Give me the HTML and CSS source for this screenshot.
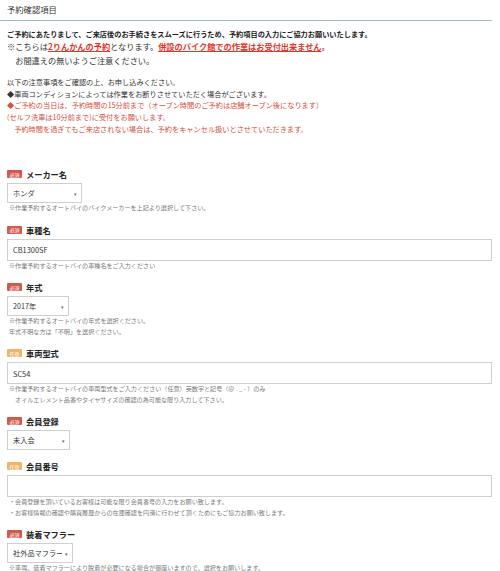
FILE: index.html
```html
<!DOCTYPE html>
<html lang="ja">
<head>
<meta charset="utf-8">
<title>予約確認項目</title>
<link rel="stylesheet" href="styles.css">
</head>
<body>
<div class="page">
  <h2 class="title">予約確認項目</h2>
  <div class="intro">
    <p class="lead">ご予約にあたりまして、ご来店後のお手続きをスムーズに行うため、予約項目の入力にご協力お願いいたします。</p>
    <p class="warn">※こちらは<strong class="em">2りんかんの予約</strong>となります。<strong class="em">併設のバイク館での作業はお受付出来ません</strong>。<br>　お間違えの無いようご注意ください。</p>
  </div>
  <ul class="notes">
    <li>以下の注意事項をご確認の上、お申し込みください。</li>
    <li>◆車両コンディションによっては作業をお断りさせていただく場合がございます。</li>
    <li class="red">◆ご予約の当日は、予約時間の15分前まで（オープン時間のご予約は店舗オープン後になります）</li>
    <li class="red">(セルフ洗車は10分前まで)に受付をお願いします。</li>
    <li class="red">　予約時間を過ぎてもご来店されない場合は、予約をキャンセル扱いとさせていただきます。</li>
  </ul>
  <form class="fields">
    <div class="field">
      <div class="label"><span class="badge req">必須</span>メーカー名</div>
      <div class="select w-maker"><select><option>ホンダ</option></select><span class="arrow">▾</span></div>
      <p class="hint">※作業予約するオートバイのバイクメーカーを上記より選択して下さい。</p>
    </div>
    <div class="field">
      <div class="label"><span class="badge req">必須</span>車種名</div>
      <input class="text" type="text" value="CB1300SF">
      <p class="hint">※作業予約するオートバイの車種名をご入力ください</p>
    </div>
    <div class="field">
      <div class="label"><span class="badge req">必須</span>年式</div>
      <div class="select w-year"><select><option>2017年</option></select><span class="arrow">▾</span></div>
      <p class="hint">※作業予約するオートバイの年式を選択ください。<br>年式不明な方は「不明」を選択ください。</p>
    </div>
    <div class="field">
      <div class="label"><span class="badge opt">任意</span>車両型式</div>
      <input class="text" type="text" value="SC54">
      <p class="hint">※作業予約するオートバイの車両型式をご入力ください（任意）英数字と記号（＠ . _ - ）のみ<br>　オイルエレメント品番やタイヤサイズの確認の為可能な限り入力して下さい。</p>
    </div>
    <div class="field">
      <div class="label"><span class="badge req">必須</span>会員登録</div>
      <div class="select w-member"><select><option>未入会</option></select><span class="arrow">▾</span></div>
    </div>
    <div class="field">
      <div class="label"><span class="badge opt">任意</span>会員番号</div>
      <input class="text" type="text" value="">
      <p class="hint">・会員登録を頂いているお客様は可能な限り会員番号の入力をお願い致します。<br>・お客様情報の確認や購買履歴からの在庫確認を円滑に行わせて頂くためにもご協力お願い致します。</p>
    </div>
    <div class="field">
      <div class="label"><span class="badge req">必須</span>装着マフラー</div>
      <div class="select w-muffler"><select><option>社外品マフラー</option></select><span class="arrow">▾</span></div>
      <p class="hint">※車両、装着マフラーにより脱着が必要になる場合が御座いますので、選択をお願いします。</p>
    </div>
  </form>
</div>
</body>
</html>
```
FILE: styles.css
```css
* {
  box-sizing: border-box;
  margin: 0;
  padding: 0;
}

body {
  margin: 0;
  background: #fff;
  font-family: "Noto Sans CJK JP", "Noto Sans", sans-serif;
  color: #333;
}

.page {
  width: 492px;
}

.title {
  height: 21px;
  padding-left: 7px;
  font-size: 8.3px;
  font-weight: normal;
  line-height: 18px;
  color: #333;
  border-bottom: 1px solid #9dbfb7;
}

.intro {
  padding-left: 7px;
  margin-top: 8px;
}

.lead {
  font-size: 7.2px;
  line-height: 10px;
  font-weight: bold;
  color: #1a1a1a;
  white-space: nowrap;
}

.warn {
  font-size: 8.2px;
  line-height: 14px;
  color: #333;
  white-space: nowrap;
}

.em {
  color: #e0362c;
  text-decoration: underline;
}

.notes {
  list-style: none;
  padding-left: 7px;
  margin-top: 9.6px;
  font-size: 7.2px;
  line-height: 11.9px;
  color: #333;
  white-space: nowrap;
}

.notes .red {
  color: #d4503f;
}

.fields {
  padding-left: 7px;
  margin-top: 32px;
  display: flex;
  flex-direction: column;
  gap: 10px;
}

.label {
  display: flex;
  align-items: center;
  height: 12px;
  margin-bottom: 3px;
  font-size: 8.2px;
  font-weight: bold;
  color: #222;
}

.badge {
  display: flex;
  align-items: center;
  justify-content: center;
  width: 15px;
  height: 8px;
  margin-right: 4px;
  font-size: 5px;
  font-weight: normal;
  color: #fff;
  border-radius: 1px;
}

.req {
  background: #cf5a4c;
}

.opt {
  background: #f0b56a;
}

.select {
  position: relative;
  height: 20px;
  font-size: 7.2px;
  line-height: 1;
}

.select select {
  display: block;
  appearance: none;
  -webkit-appearance: none;
  width: 100%;
  height: 100%;
  padding: 0 10px 0 5px;
  border: 1px solid #cfcfcf;
  border-radius: 0;
  background: #fff;
  font-family: inherit;
  font-size: 7.2px;
  color: #333;
  outline: none;
}

.select .arrow {
  position: absolute;
  right: 5px;
  top: 50%;
  transform: translateY(-50%);
  font-size: 5px;
  color: #666;
  pointer-events: none;
}

.w-maker { width: 75px; }
.w-year { width: 62px; }
.w-member { width: 63px; }
.w-muffler { width: 66px; }

.text {
  display: block;
  width: 485px;
  height: 22px;
  padding: 0 5px;
  border: 1px solid #cfcfcf;
  border-radius: 0;
  font-family: inherit;
  font-size: 7.4px;
  color: #333;
  outline: none;
}

.hint {
  padding-left: 2px;
  font-size: 6.1px;
  line-height: 10.5px;
  color: #7a7a7a;
  white-space: nowrap;
}
```
